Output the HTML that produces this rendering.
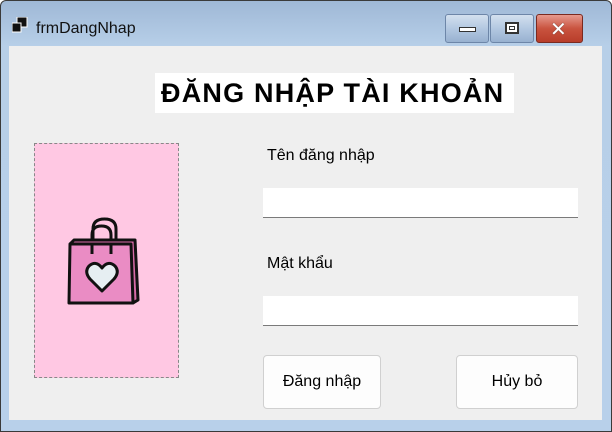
<!DOCTYPE html>
<html><head><meta charset="utf-8"><style>
*{margin:0;padding:0;box-sizing:border-box}
body{width:612px;height:432px;overflow:hidden;background:#fff;font-family:"Liberation Sans","DejaVu Sans",sans-serif;position:relative}
.win{position:absolute;left:0;top:0;width:612px;height:432px;border:1px solid #3a3a3a;border-radius:6px 6px 0 0;background:linear-gradient(#9fb8d6,#b7cfe8 45px,#b8d0ea);}
.client{position:absolute;left:8px;top:45px;width:593px;height:374px;background:#efefef}
.t{position:absolute;font-size:16px;color:#000}
.tb{position:absolute;background:#fff;border-bottom:1px solid #7a7a7a}
.btn{position:absolute;background:#fdfdfd;border:1px solid #d0d0d0;border-radius:4px;font-size:16px;display:flex;align-items:center;justify-content:center}
.cb{position:absolute;top:13px;height:29px;border:1px solid #6d86a8;border-radius:3px;background:linear-gradient(#d3e0ef,#b3c8e1 50%,#98b1d0)}
</style></head><body>
<div class="win">
 <svg style="position:absolute;left:11px;top:16px" width="16" height="16"><rect x="5" y="0" width="10" height="10" fill="#111" stroke="#fff"/><rect x="0" y="6" width="9" height="9" fill="#111" stroke="#fff"/></svg>
 <div class="t" style="left:35px;top:19px;font-size:16px;color:#111">frmDangNhap</div>
 <div class="cb" style="left:444px;width:44px"><div style="position:absolute;left:13px;top:12px;width:17px;height:5px;background:#fff;border:1px solid #333"></div></div>
 <div class="cb" style="left:489px;width:44px"><div style="position:absolute;left:14px;top:7px;width:14px;height:12px;border:2px solid #333;background:#fff;box-shadow:inset 0 0 0 2px #fff,inset 0 0 0 3px #333"></div></div>
 <div class="cb" style="left:535px;width:47px;background:linear-gradient(#e69a8e,#c9533f 50%,#b83d2a);border-color:#7a2a20"><div style="position:absolute;left:13px;top:2px;color:#fff;font-weight:bold;font-size:20px;text-shadow:0 0 1px #333">✕</div></div>
 <div class="client">
  <div style="position:absolute;left:146px;top:27px;width:359px;height:40px;background:#fff"></div>
  <div class="t" style="left:152px;top:32px;font-size:27px;font-weight:bold;letter-spacing:1.2px">ĐĂNG NHẬP TÀI KHOẢN</div>
  <div style="position:absolute;left:25px;top:97px;width:145px;height:235px;background:#ffc8e3;border:1px dashed #888"></div>
  <svg style="position:absolute;left:56px;top:169px" width="80" height="95" viewBox="0 0 80 95">
   <path d="M28 36 V14 Q28 4 39.5 4 Q51 4 51 14 V29" fill="none" stroke="#111" stroke-width="3"/>
   <path d="M27 39 V20 Q27 11 36.5 11 Q46 11 46 20 V39" fill="none" stroke="#111" stroke-width="3"/>
   <path d="M5 29 L9 25 H70 L73 85 L68 88" fill="#d66aa6" stroke="#111" stroke-width="3" stroke-linejoin="round"/>
   <path d="M5 29 H66 L68 88 H4 Z" fill="#ea8cc4" stroke="#111" stroke-width="3" stroke-linejoin="round"/>
   <path d="M27 29 V39 M46 29 V39" stroke="#111" stroke-width="3"/>
   <path d="M37 76 L25 64 Q19 57 24 51 Q31 45 37 53 Q43 45 50 51 Q55 57 49 64 Z" fill="#e6eef2" stroke="#111" stroke-width="3" stroke-linejoin="round"/>
  </svg>
  <div class="t" style="left:258px;top:101px">Tên đăng nhập</div>
  <div class="tb" style="left:254px;top:142px;width:315px;height:30px"></div>
  <div class="t" style="left:258px;top:209px">Mật khẩu</div>
  <div class="tb" style="left:254px;top:250px;width:315px;height:30px"></div>
  <div class="btn" style="left:254px;top:309px;width:118px;height:54px">Đăng nhập</div>
  <div class="btn" style="left:447px;top:309px;width:122px;height:54px">Hủy bỏ</div>
 </div>
</div>
</body></html>
